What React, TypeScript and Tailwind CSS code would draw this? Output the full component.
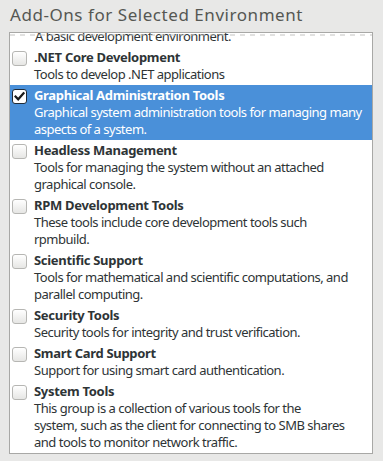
import React from "react";

type Item = { title: string; lines: string[]; checked?: boolean; selected?: boolean };

const items: Item[] = [
  { title: ".NET Core Development", lines: ["Tools to develop .NET applications"] },
  {
    title: "Graphical Administration Tools",
    lines: ["Graphical system administration tools for managing many", "aspects of a system."],
    checked: true,
    selected: true,
  },
  { title: "Headless Management", lines: ["Tools for managing the system without an attached", "graphical console."] },
  { title: "RPM Development Tools", lines: ["These tools include core development tools such", "rpmbuild."] },
  { title: "Scientific Support", lines: ["Tools for mathematical and scientific computations, and", "parallel computing."] },
  { title: "Security Tools", lines: ["Security tools for integrity and trust verification."] },
  { title: "Smart Card Support", lines: ["Support for using smart card authentication."] },
  {
    title: "System Tools",
    lines: [
      "This group is a collection of various tools for the",
      "system, such as the client for connecting to SMB shares",
      "and tools to monitor network traffic.",
    ],
  },
];

function Checkbox({ checked, selected }: { checked?: boolean; selected?: boolean }) {
  return (
    <div
      className={
        "w-[15px] h-[15px] rounded-[3px] border flex items-center justify-center shrink-0 " +
        (selected
          ? "border-[#1f2a36] bg-white"
          : "border-[#b6b6b3] bg-gradient-to-b from-[#ffffff] to-[#e6e6e4]")
      }
    >
      {checked && (
        <svg width="11" height="11" viewBox="0 0 11 11">
          <path d="M1.5 5.5 L4.2 8.3 L9.5 2.2" fill="none" stroke="#1a1a1a" strokeWidth="2.2" strokeLinecap="square" />
        </svg>
      )}
    </div>
  );
}

export default function App() {
  return (
    <div
      className="w-[383px] h-[461px] bg-[#e8e8e7] overflow-hidden"
      style={{ fontFamily: '"Noto Sans", "Open Sans", sans-serif' }}
    >
      <div className="pl-[10px] pt-[3px] h-[32px] text-[17px] leading-[24px] tracking-[0.55px] text-[#555753] whitespace-nowrap">
        Add-Ons for Selected Environment
      </div>
      <div className="ml-[9px] w-[364px] h-[422px] border border-[#a8a8a6] bg-white relative overflow-hidden">
        <div className="h-[13.5px] overflow-hidden flex items-end pb-[2px] pl-[25px]">
          <div className="text-[13px] leading-[17px] tracking-[-0.5px] text-[#2e3436] whitespace-nowrap">
            A basic development environment.
          </div>
        </div>
        {items.map((it) => (
          <div
            key={it.title}
            className={
              "flex py-[2px] pl-[2px] " + (it.selected ? "bg-[#4a90d9] text-white" : "text-[#2e3436]")
            }
          >
            <div className="pt-[2.5px]">
              <Checkbox checked={it.checked} selected={it.selected} />
            </div>
            <div className="pl-[7px] text-[13px] leading-[17px]">
              <div className="font-bold tracking-[-0.3px] whitespace-nowrap">{it.title}</div>
              {it.lines.map((l) => (
                <div key={l} className="tracking-[-0.5px] whitespace-nowrap">
                  {l}
                </div>
              ))}
            </div>
          </div>
        ))}
        <svg className="absolute left-0 top-[1px]" width="362" height="2">
          <line x1="0" y1="1" x2="362" y2="1" stroke="#c4c4c2" strokeWidth="1.2" strokeDasharray="5 5" />
        </svg>
      </div>
    </div>
  );
}
